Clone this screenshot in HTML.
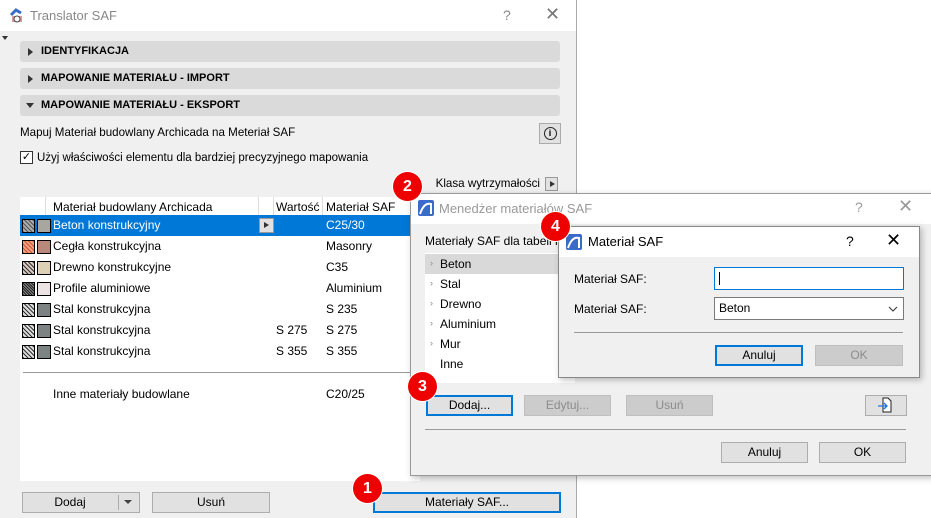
<!DOCTYPE html>
<html><head><meta charset="utf-8"><style>
*{box-sizing:border-box;margin:0;padding:0}
body{width:931px;height:518px;position:relative;overflow:hidden;background:#fff;font-family:"Liberation Sans",sans-serif;font-size:12px;color:#000}
.a{position:absolute}
.sec{position:absolute;left:20px;width:540px;height:21px;background:#dadada;border-radius:3px;font-weight:bold;font-size:11px;line-height:21px;padding-left:21px}
.sec:before{content:"";position:absolute;left:8px;top:7px;border-left:5px solid #333;border-top:4px solid transparent;border-bottom:4px solid transparent}
.sec.open:before{left:6px;top:8px;border-top:5px solid #333;border-left:4px solid transparent;border-right:4px solid transparent;border-bottom:0}
.btn{position:absolute;height:21px;background:#e1e1e1;border:1px solid #adadad;text-align:center;line-height:19px}
.btn.f{border:2px solid #0078d7;line-height:17px}
.btn.d{background:#ccc;border-color:#bfbfbf;color:#8c8c8c}
.row{position:absolute;left:20px;width:400px;height:21px;line-height:21px}
.h{position:absolute;top:4px;width:13px;height:14px;border:1px solid #000}
.c{position:absolute;left:17px;top:4px;width:14px;height:14px;border:1px solid #000}
.badge{position:absolute;width:29px;height:29px;border-radius:50%;background:#e00;color:#fff;font-weight:bold;font-size:16px;text-align:center;line-height:29px;box-shadow:0 0 0 1px #fff}
.tri{position:absolute;font-size:9px;color:#888}
</style></head><body>
<div class="a" style="left:0;top:0;width:577px;height:518px;background:#f0f0f0;border-right:1px solid #aaa"></div>
<div class="a" style="left:0;top:0;width:576px;height:31px;background:#fff"></div>
<svg class="a" style="left:8px;top:7px" width="18" height="18"><path d="M3 8 L8 3 L13 6" stroke="#3a6bc9" stroke-width="3" fill="none"/><rect x="4" y="9" width="10" height="6" fill="#c55" opacity=".6"/><circle cx="9" cy="12" r="3" fill="#fff" stroke="#444"/></svg>
<div class="a" style="left:30px;top:8px;font-size:13px;color:#888">Translator SAF</div>
<div class="a" style="left:503px;top:7px;font-size:14px;color:#888">?</div>
<div class="a" style="left:545px;top:4px;font-size:18px;color:#777">✕</div>
<div class="a" style="left:2px;top:36px;border-top:4px solid #333;border-left:3px solid transparent;border-right:3px solid transparent"></div>
<div class="sec" style="top:41px">IDENTYFIKACJA</div>
<div class="sec" style="top:68px">MAPOWANIE MATERIAŁU - IMPORT</div>
<div class="sec open" style="top:95px">MAPOWANIE MATERIAŁU - EKSPORT</div>
<div class="a" style="left:20px;top:126px;font-size:11.6px">Mapuj Materiał budowlany Archicada na Meteriał SAF</div>
<div class="a" style="left:539px;top:123px;width:22px;height:21px;border:1px solid #aaa;background:#e1e1e1;text-align:center;line-height:19px"><span style="display:inline-block;width:13px;height:13px;border:1.5px solid #222;border-radius:50%;font-size:9px;font-weight:bold;line-height:10px;vertical-align:middle">i</span></div>
<div class="a" style="left:20px;top:151px;width:13px;height:13px;border:1px solid #333;background:#fff;font-size:11px;line-height:11px;text-align:center">✓</div>
<div class="a" style="left:37px;top:152px;font-size:11.5px">Użyj właściwości elementu dla bardziej precyzyjnego mapowania</div>
<div class="a" style="right:391px;top:177px;font-size:11.6px">Klasa wytrzymałości</div>
<div class="a" style="left:545px;top:177px;width:13px;height:14px;border:1px solid #999;background:#e1e1e1"><div class="a" style="left:4px;top:3px;border-left:5px solid #333;border-top:3px solid transparent;border-bottom:3px solid transparent"></div></div>
<div class="a" style="left:20px;top:197px;width:400px;height:284px;background:#fff"></div>
<div class="a" style="left:53px;top:200px">Materiał budowlany Archicada</div>
<div class="a" style="left:258px;top:197px;width:1px;height:18px;background:#ddd"></div>
<div class="a" style="left:273px;top:197px;width:1px;height:18px;background:#ddd"></div>
<div class="a" style="left:322px;top:197px;width:1px;height:18px;background:#ddd"></div>
<div class="a" style="left:45px;top:197px;width:1px;height:18px;background:#ddd"></div>
<div class="a" style="left:276px;top:200px">Wartość</div>
<div class="a" style="left:326px;top:200px">Materiał SAF</div>
<div class="row" style="top:215px;background:#0078d7;color:#fff"><div class="h" style="left:2px;background:repeating-linear-gradient(45deg,#555 0 1px,#aaa 1px 3px)"></div><div class="c" style="background:#a7a69f"></div><span class="a" style="left:33px">Beton konstrukcyjny</span><div class="a" style="left:239px;top:3px;width:15px;height:15px;background:#e1e1e1;border:1px solid #999"><div class="a" style="left:4px;top:3px;border-left:5px solid #333;border-top:3px solid transparent;border-bottom:3px solid transparent"></div></div><span class="a" style="left:306px">C25/30</span></div>
<div class="row" style="top:236px"><div class="h" style="left:2px;background:repeating-linear-gradient(45deg,#c53 0 1px,#f0a080 1px 3px)"></div><div class="c" style="background:#b8887a"></div><span class="a" style="left:33px">Cegła konstrukcyjna</span><span class="a" style="left:306px">Masonry</span></div>
<div class="row" style="top:257px"><div class="h" style="left:2px;background:repeating-linear-gradient(45deg,#333 0 1px,#d8c8c0 1px 3px)"></div><div class="c" style="background:#ddd0b4"></div><span class="a" style="left:33px">Drewno konstrukcyjne</span><span class="a" style="left:306px">C35</span></div>
<div class="row" style="top:278px"><div class="h" style="left:2px;background:repeating-linear-gradient(45deg,#222 0 1px,#888 1px 2px)"></div><div class="c" style="background:#ece4e4"></div><span class="a" style="left:33px">Profile aluminiowe</span><span class="a" style="left:306px">Aluminium</span></div>
<div class="row" style="top:299px"><div class="h" style="left:2px;background:repeating-linear-gradient(45deg,#333 0 1px,#ddd 1px 3px)"></div><div class="c" style="background:#7d8383"></div><span class="a" style="left:33px">Stal konstrukcyjna</span><span class="a" style="left:306px">S 235</span></div>
<div class="row" style="top:320px"><div class="h" style="left:2px;background:repeating-linear-gradient(45deg,#333 0 1px,#ddd 1px 3px)"></div><div class="c" style="background:#7d8383"></div><span class="a" style="left:33px">Stal konstrukcyjna</span><span class="a" style="left:256px">S 275</span><span class="a" style="left:306px">S 275</span></div>
<div class="row" style="top:341px"><div class="h" style="left:2px;background:repeating-linear-gradient(45deg,#333 0 1px,#ddd 1px 3px)"></div><div class="c" style="background:#7d8383"></div><span class="a" style="left:33px">Stal konstrukcyjna</span><span class="a" style="left:256px">S 355</span><span class="a" style="left:306px">S 355</span></div>
<div class="a" style="left:23px;top:372px;width:390px;height:1px;background:#999"></div>
<div class="a" style="left:53px;top:387px">Inne materiały budowlane</div>
<div class="a" style="left:326px;top:387px">C20/25</div>
<div class="btn" style="left:22px;top:492px;width:118px">Dodaj<span style="display:inline-block;width:22px"></span></div>
<div class="a" style="left:118px;top:495px;width:1px;height:15px;background:#aaa"></div>
<div class="a" style="left:124px;top:500px;border-top:4px solid #444;border-left:4px solid transparent;border-right:4px solid transparent"></div>
<div class="btn" style="left:152px;top:492px;width:118px">Usuń</div>
<div class="btn f" style="left:373px;top:492px;width:188px">Materiały SAF...</div>
<div class="a" style="left:410px;top:193px;width:525px;height:283px;background:#f0f0f0;border:1px solid #999;box-shadow:2px 2px 6px rgba(0,0,0,.25)"></div>
<div class="a" style="left:411px;top:194px;width:524px;height:30px;background:#fff"></div>
<svg class="a" style="left:418px;top:200px" width="16" height="16"><rect width="16" height="16" rx="2" fill="#3a6bc9"/><path d="M2 14 Q6 2 13 4 L13 14" stroke="#fff" stroke-width="2" fill="none"/></svg>
<div class="a" style="left:439px;top:201px;font-size:13px;color:#999">Menedżer materiałów SAF</div>
<div class="a" style="left:855px;top:199px;font-size:14px;color:#999">?</div>
<div class="a" style="left:898px;top:196px;font-size:18px;color:#999">✕</div>
<div class="a" style="left:425px;top:234px">Materiały SAF dla tabeli m</div>
<div class="a" style="left:425px;top:253px;width:150px;height:130px;background:#fff"></div>
<div class="a" style="left:425px;top:254px;width:150px;height:20px;background:#d9d9d9"></div>
<div class="tri" style="left:430px;top:258px">›</div><div class="a" style="left:440px;top:257px">Beton</div>
<div class="tri" style="left:430px;top:278px">›</div><div class="a" style="left:440px;top:277px">Stal</div>
<div class="tri" style="left:430px;top:298px">›</div><div class="a" style="left:440px;top:297px">Drewno</div>
<div class="tri" style="left:430px;top:318px">›</div><div class="a" style="left:440px;top:317px">Aluminium</div>
<div class="tri" style="left:430px;top:338px">›</div><div class="a" style="left:440px;top:337px">Mur</div>
<div class="a" style="left:440px;top:357px">Inne</div>
<div class="btn f" style="left:426px;top:395px;width:87px">Dodaj...</div>
<div class="btn d" style="left:524px;top:395px;width:87px">Edytuj...</div>
<div class="btn d" style="left:626px;top:395px;width:87px">Usuń</div>
<div class="btn" style="left:865px;top:395px;width:42px"><svg width="18" height="18"><path d="M6 2 H11 L14 5 V16 H6 Z" fill="#fff" stroke="#222"/><path d="M1 10 H10 M7 7 L10 10 L7 13" stroke="#1a73e8" stroke-width="1.3" fill="none"/></svg></div>
<div class="a" style="left:425px;top:429px;width:481px;height:1px;background:#999"></div>
<div class="btn" style="left:721px;top:442px;width:87px">Anuluj</div>
<div class="btn" style="left:819px;top:442px;width:87px">OK</div>
<div class="a" style="left:558px;top:226px;width:362px;height:152px;background:#f0f0f0;border:1px solid #888;box-shadow:2px 2px 6px rgba(0,0,0,.25)"></div>
<div class="a" style="left:559px;top:227px;width:360px;height:30px;background:#fff"></div>
<svg class="a" style="left:566px;top:234px" width="16" height="16"><rect width="16" height="16" rx="2" fill="#3a6bc9"/><path d="M2 14 Q6 2 13 4 L13 14" stroke="#fff" stroke-width="2" fill="none"/></svg>
<div class="a" style="left:588px;top:234px;font-size:13px">Materiał SAF</div>
<div class="a" style="left:846px;top:233px;font-size:14px">?</div>
<div class="a" style="left:886px;top:230px;font-size:18px">✕</div>
<div class="a" style="left:574px;top:272px">Materiał SAF:</div>
<div class="a" style="left:574px;top:302px">Materiał SAF:</div>
<div class="a" style="left:714px;top:267px;width:190px;height:23px;background:#fff;border:1px solid #0078d7"><div class="a" style="left:4px;top:4px;width:1px;height:13px;background:#000"></div></div>
<div class="a" style="left:714px;top:297px;width:190px;height:23px;background:#fff;border:1px solid #7a7a7a;padding-left:4px;line-height:21px">Beton<svg class="a" style="right:5px;top:8px" width="10" height="6"><path d="M1 1 L5 5 L9 1" stroke="#333" fill="none"/></svg></div>
<div class="a" style="left:574px;top:332px;width:329px;height:1px;background:#999"></div>
<div class="btn f" style="left:715px;top:345px;width:88px">Anuluj</div>
<div class="btn d" style="left:815px;top:345px;width:88px">OK</div>
<div class="badge" style="left:353px;top:474px">1</div>
<div class="badge" style="left:393px;top:172px">2</div>
<div class="badge" style="left:408px;top:372px">3</div>
<div class="badge" style="left:541px;top:212px">4</div>
</body></html>
